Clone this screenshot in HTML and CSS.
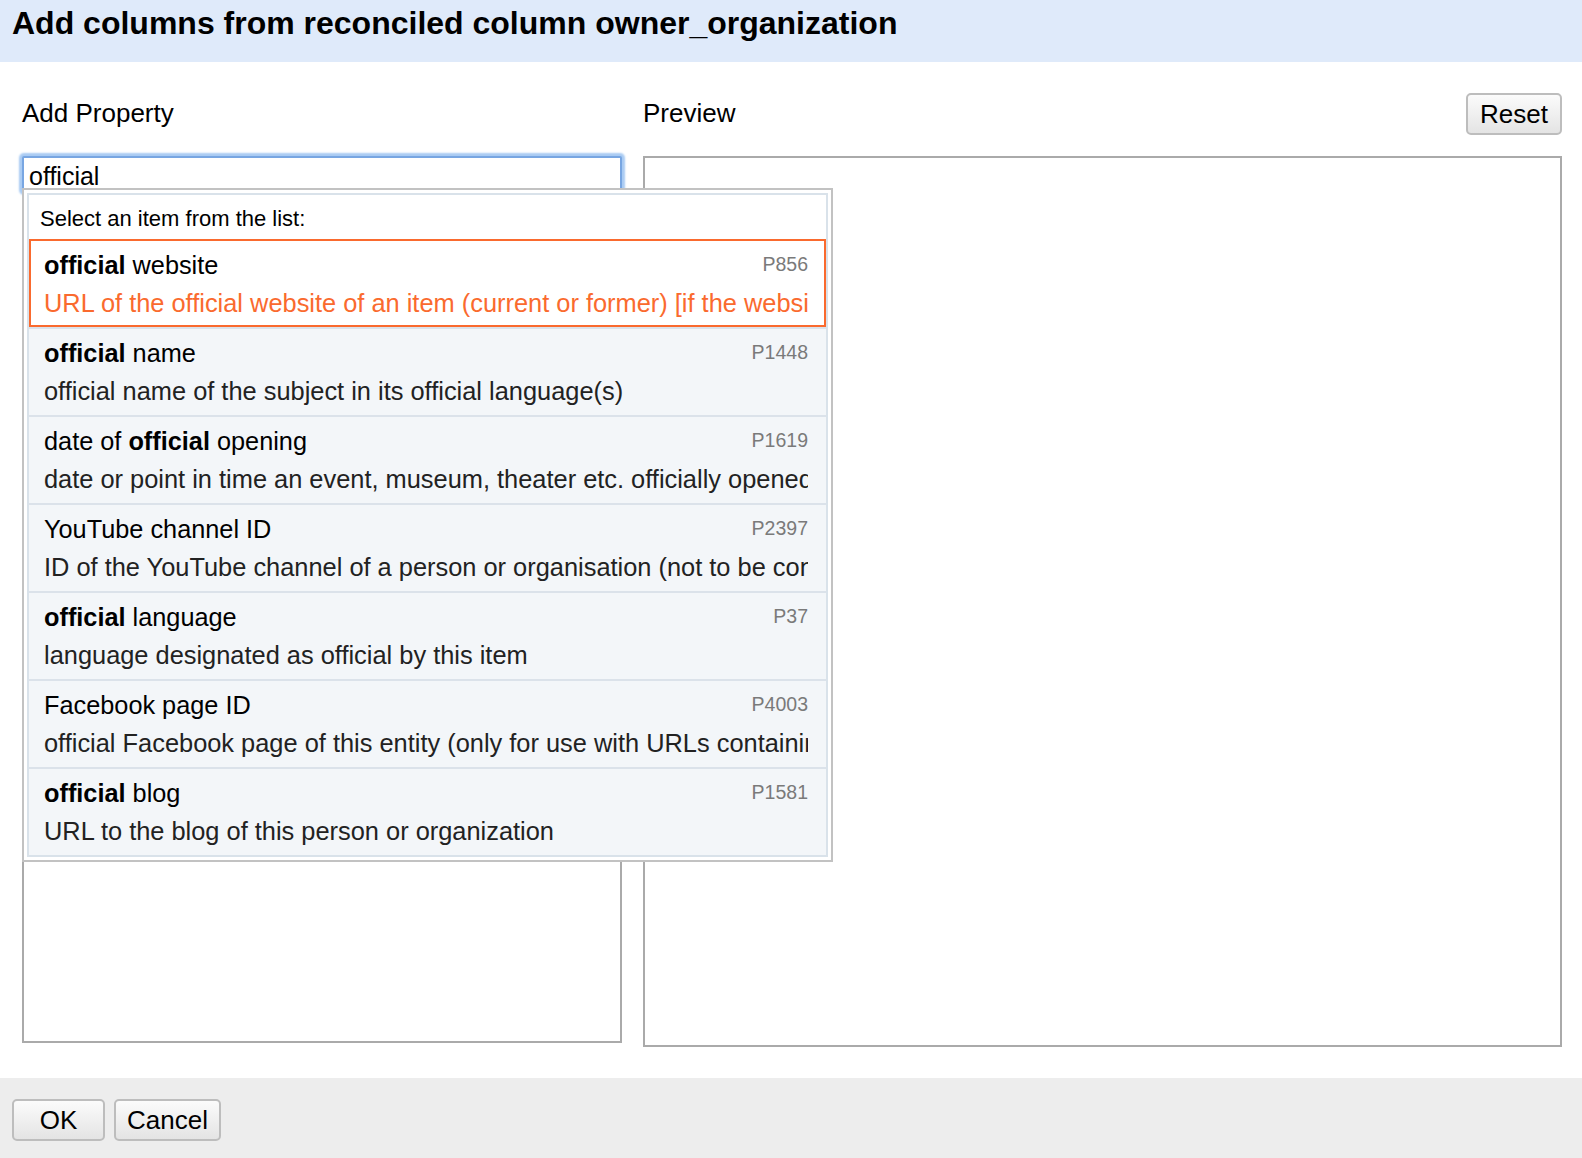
FILE: index.html
```html
<!DOCTYPE html>
<html>
<head>
<meta charset="utf-8">
<link rel="stylesheet" href="styles.css">
</head>
<body>
<div class="dialog">
  <div class="dialog-header">Add columns from reconciled column owner_organization</div>
  <div class="dialog-body">
    <div class="label-row">
      <div class="label label-left">Add Property</div>
      <div class="label label-right">Preview</div>
      <button class="btn btn-reset">Reset</button>
    </div>
    <div class="columns">
      <div class="left-col">
        <div class="search-input">official</div>
        <div class="prop-box"></div>
        <div class="suggest">
          <div class="suggest-list">
            <div class="suggest-head">Select an item from the list:</div>
            <div class="item selected">
              <div class="item-top"><span class="item-name"><b>official</b> website</span><span class="item-id">P856</span></div>
              <div class="item-desc">URL of the official website of an item (current or former) [if the website changes, add an additional statement]</div>
            </div>
            <div class="item">
              <div class="item-top"><span class="item-name"><b>official</b> name</span><span class="item-id">P1448</span></div>
              <div class="item-desc">official name of the subject in its official language(s)</div>
            </div>
            <div class="item">
              <div class="item-top"><span class="item-name">date of <b>official</b> opening</span><span class="item-id">P1619</span></div>
              <div class="item-desc">date or point in time an event, museum, theater etc. officially opened</div>
            </div>
            <div class="item">
              <div class="item-top"><span class="item-name">YouTube channel ID</span><span class="item-id">P2397</span></div>
              <div class="item-desc">ID of the YouTube channel of a person or organisation (not to be confused with the name of the channel)</div>
            </div>
            <div class="item">
              <div class="item-top"><span class="item-name"><b>official</b> language</span><span class="item-id">P37</span></div>
              <div class="item-desc">language designated as official by this item</div>
            </div>
            <div class="item">
              <div class="item-top"><span class="item-name">Facebook page ID</span><span class="item-id">P4003</span></div>
              <div class="item-desc">official Facebook page of this entity (only for use with URLs containing "/pages/")</div>
            </div>
            <div class="item">
              <div class="item-top"><span class="item-name"><b>official</b> blog</span><span class="item-id">P1581</span></div>
              <div class="item-desc">URL to the blog of this person or organization</div>
            </div>
          </div>
        </div>
      </div>
      <div class="preview-box"></div>
    </div>
  </div>
  <div class="dialog-footer">
    <button class="btn btn-ok">OK</button>
    <button class="btn btn-cancel">Cancel</button>
  </div>
</div>
</body>
</html>
```

FILE: styles.css
```css
* { box-sizing: border-box; }
html, body { margin: 0; padding: 0; }
body {
  font-family: "Liberation Sans", Arial, Helvetica, sans-serif;
  color: #000;
  background: #fff;
  width: 1582px;
  height: 1158px;
  overflow: hidden;
}
.dialog {
  display: flex;
  flex-direction: column;
  height: 1158px;
}
.dialog-header {
  height: 62px;
  background: #dfeafa;
  padding: 3px 0 0 12px;
  font-size: 32px;
  font-weight: bold;
  line-height: 40px;
  white-space: nowrap;
}
.dialog-body {
  flex: 1;
  padding: 31px 20px 0 22px;
  display: flex;
  flex-direction: column;
}
.label-row {
  display: flex;
  align-items: center;
  height: 42px;
}
.label {
  font-size: 26px;
  line-height: 30px;
  margin-top: -2px;
}
.label-left { width: 621px; }
.label-right { flex: 1; }
.btn {
  font-family: "Liberation Sans", Arial, Helvetica, sans-serif;
  font-size: 26px;
  color: #000;
  height: 42px;
  border: 2px solid #bdbdbd;
  border-radius: 5px;
  background: linear-gradient(#fbfbfb, #e4e4e4);
  padding: 0;
  line-height: 36px;
}
.btn-reset { width: 96px; }
.columns {
  display: flex;
  gap: 21px;
  margin-top: 21px;
  height: 891px;
}
.left-col {
  position: relative;
  width: 600px;
  display: flex;
  flex-direction: column;
  padding-bottom: 4px;
}
.search-input {
  height: 36px;
  border: 2px solid #78a6e2;
  box-shadow: 0 0 2px 3px #a9cbf3;
  border-radius: 2px;
  font-size: 25px;
  line-height: 36px;
  padding: 0 0 0 5px;
  background: #fff;
}
.prop-box {
  flex: 1;
  border: 2px solid #aaa;
  border-top: none;
}
.preview-box {
  flex: 1;
  border: 2px solid #aaa;
}
.suggest {
  position: absolute;
  top: 32px;
  left: 0;
  width: 811px;
  background: #fff;
  border: 2px solid #c2c2c2;
  padding: 3px;
}
.suggest-list {
  border: 2px solid #d9e2ea;
  background: #f3f6f9;
}
.suggest-head {
  height: 44px;
  background: #fff;
  font-size: 22px;
  line-height: 48px;
  padding-left: 11px;
}
.item {
  height: 88px;
  border-top: 2px solid #dbe2ea;
  padding: 6px 18px 0 15px;
  background: #f3f6f9;
}
.item.selected {
  background: #fff;
  border: 2px solid #fa6a2e;
  padding: 6px 16px 0 13px;
}
.item-top {
  display: flex;
  align-items: center;
  justify-content: space-between;
  height: 36px;
}
.item-name {
  font-size: 25.3px;
  white-space: nowrap;
  color: #000;
}
.item-id {
  font-size: 19.5px;
  color: #7a7a7a;
  margin-top: -2px;
}
.item-desc {
  font-size: 25.4px;
  line-height: 40px;
  height: 40px;
  white-space: nowrap;
  overflow: hidden;
  color: #222;
}
.item.selected .item-desc { color: #fa6a2e; }
.dialog-footer {
  height: 80px;
  background: #ededed;
  padding: 21px 0 0 12px;
  display: flex;
  gap: 9px;
  align-items: flex-start;
}
.btn-ok { width: 93px; }
.btn-cancel { width: 107px; }
```
